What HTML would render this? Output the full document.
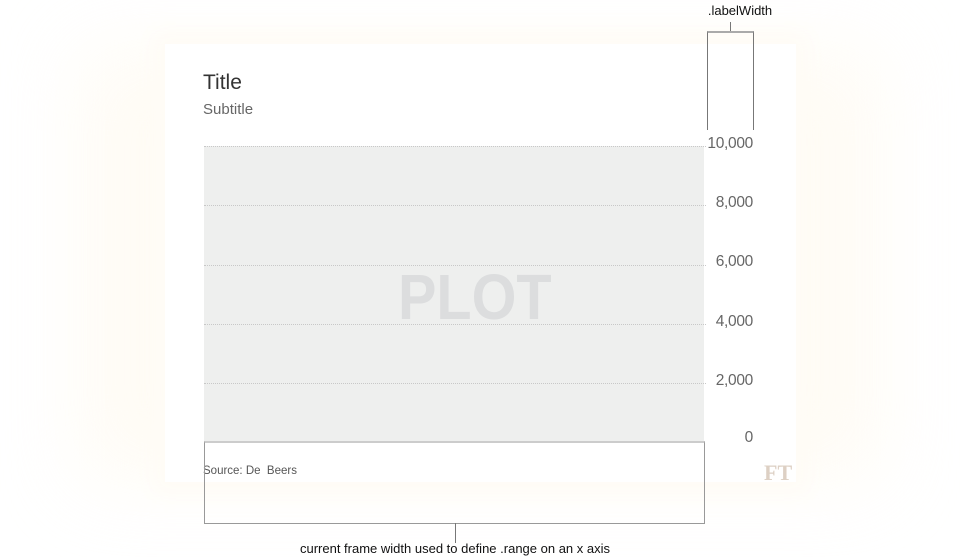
<!DOCTYPE html>
<html><head><style>
body{margin:0;width:960px;height:557px;background:#fff;position:relative;overflow:hidden;font-family:"Liberation Sans",sans-serif}
.glow{position:absolute;left:80px;top:50px;width:800px;height:430px;background:#fffaf0;filter:blur(40px);opacity:.7}
.card{position:absolute;left:165px;top:44px;width:631px;height:438px;background:#fff;box-shadow:0 0 20px 12px #fffcf6}
.plot{position:absolute;left:204px;top:146px;width:500px;height:295px;background:#eeefee}
.g{position:absolute;left:204px;width:502px;border-top:1px dotted #c8c8c8}
.lab{position:absolute;right:207px;font-size:15.5px;color:#666;letter-spacing:-.3px}
.t{position:absolute}
</style></head><body>
<div class="glow"></div>
<div class="card"></div>
<div class="t" style="left:203px;top:71px;font-size:21px;color:#333">Title</div>
<div class="t" style="left:203px;top:101px;font-size:15px;color:#666">Subtitle</div>
<div class="plot"></div>
<div class="t" style="left:398px;top:260px;font-size:64px;font-weight:bold;color:#dcddde;transform:scaleX(.9);transform-origin:left">PLOT</div>
<div class="g" style="top:146px"></div>
<div class="g" style="top:205px"></div>
<div class="g" style="top:265px"></div>
<div class="g" style="top:324px"></div>
<div class="g" style="top:383px"></div>
<div class="lab" style="top:135px">10,000</div>
<div class="lab" style="top:194px">8,000</div>
<div class="lab" style="top:253px">6,000</div>
<div class="lab" style="top:313px">4,000</div>
<div class="lab" style="top:372px">2,000</div>
<div class="lab" style="top:429px">0</div>
<div class="t" style="left:203px;top:465px;font-size:11.5px;color:#555">Source: De&nbsp; Beers</div>
<div class="t" style="left:764px;top:460px;font-size:22px;font-weight:bold;font-family:'Liberation Serif',serif;color:#ddd0c4">FT</div>
<div class="t" style="left:204px;top:441px;width:499px;height:80px;border:1px solid #999;border-top:2px solid #ccc"></div>
<div class="t" style="left:455px;top:523px;width:1px;height:20px;background:#777"></div>
<div class="t" style="left:0;width:910px;text-align:center;top:541px;font-size:13px;color:#111">current frame width used to define .range on an x axis</div>
<div class="t" style="left:707px;top:31px;width:45px;height:97px;border:1px solid #777;border-bottom:none;border-top:2px solid #aaa"></div>
<div class="t" style="left:730px;top:22px;width:1px;height:9px;background:#777"></div>
<div class="t" style="left:695px;top:3px;width:90px;text-align:center;font-size:13px;color:#111">.labelWidth</div>
</body></html>
